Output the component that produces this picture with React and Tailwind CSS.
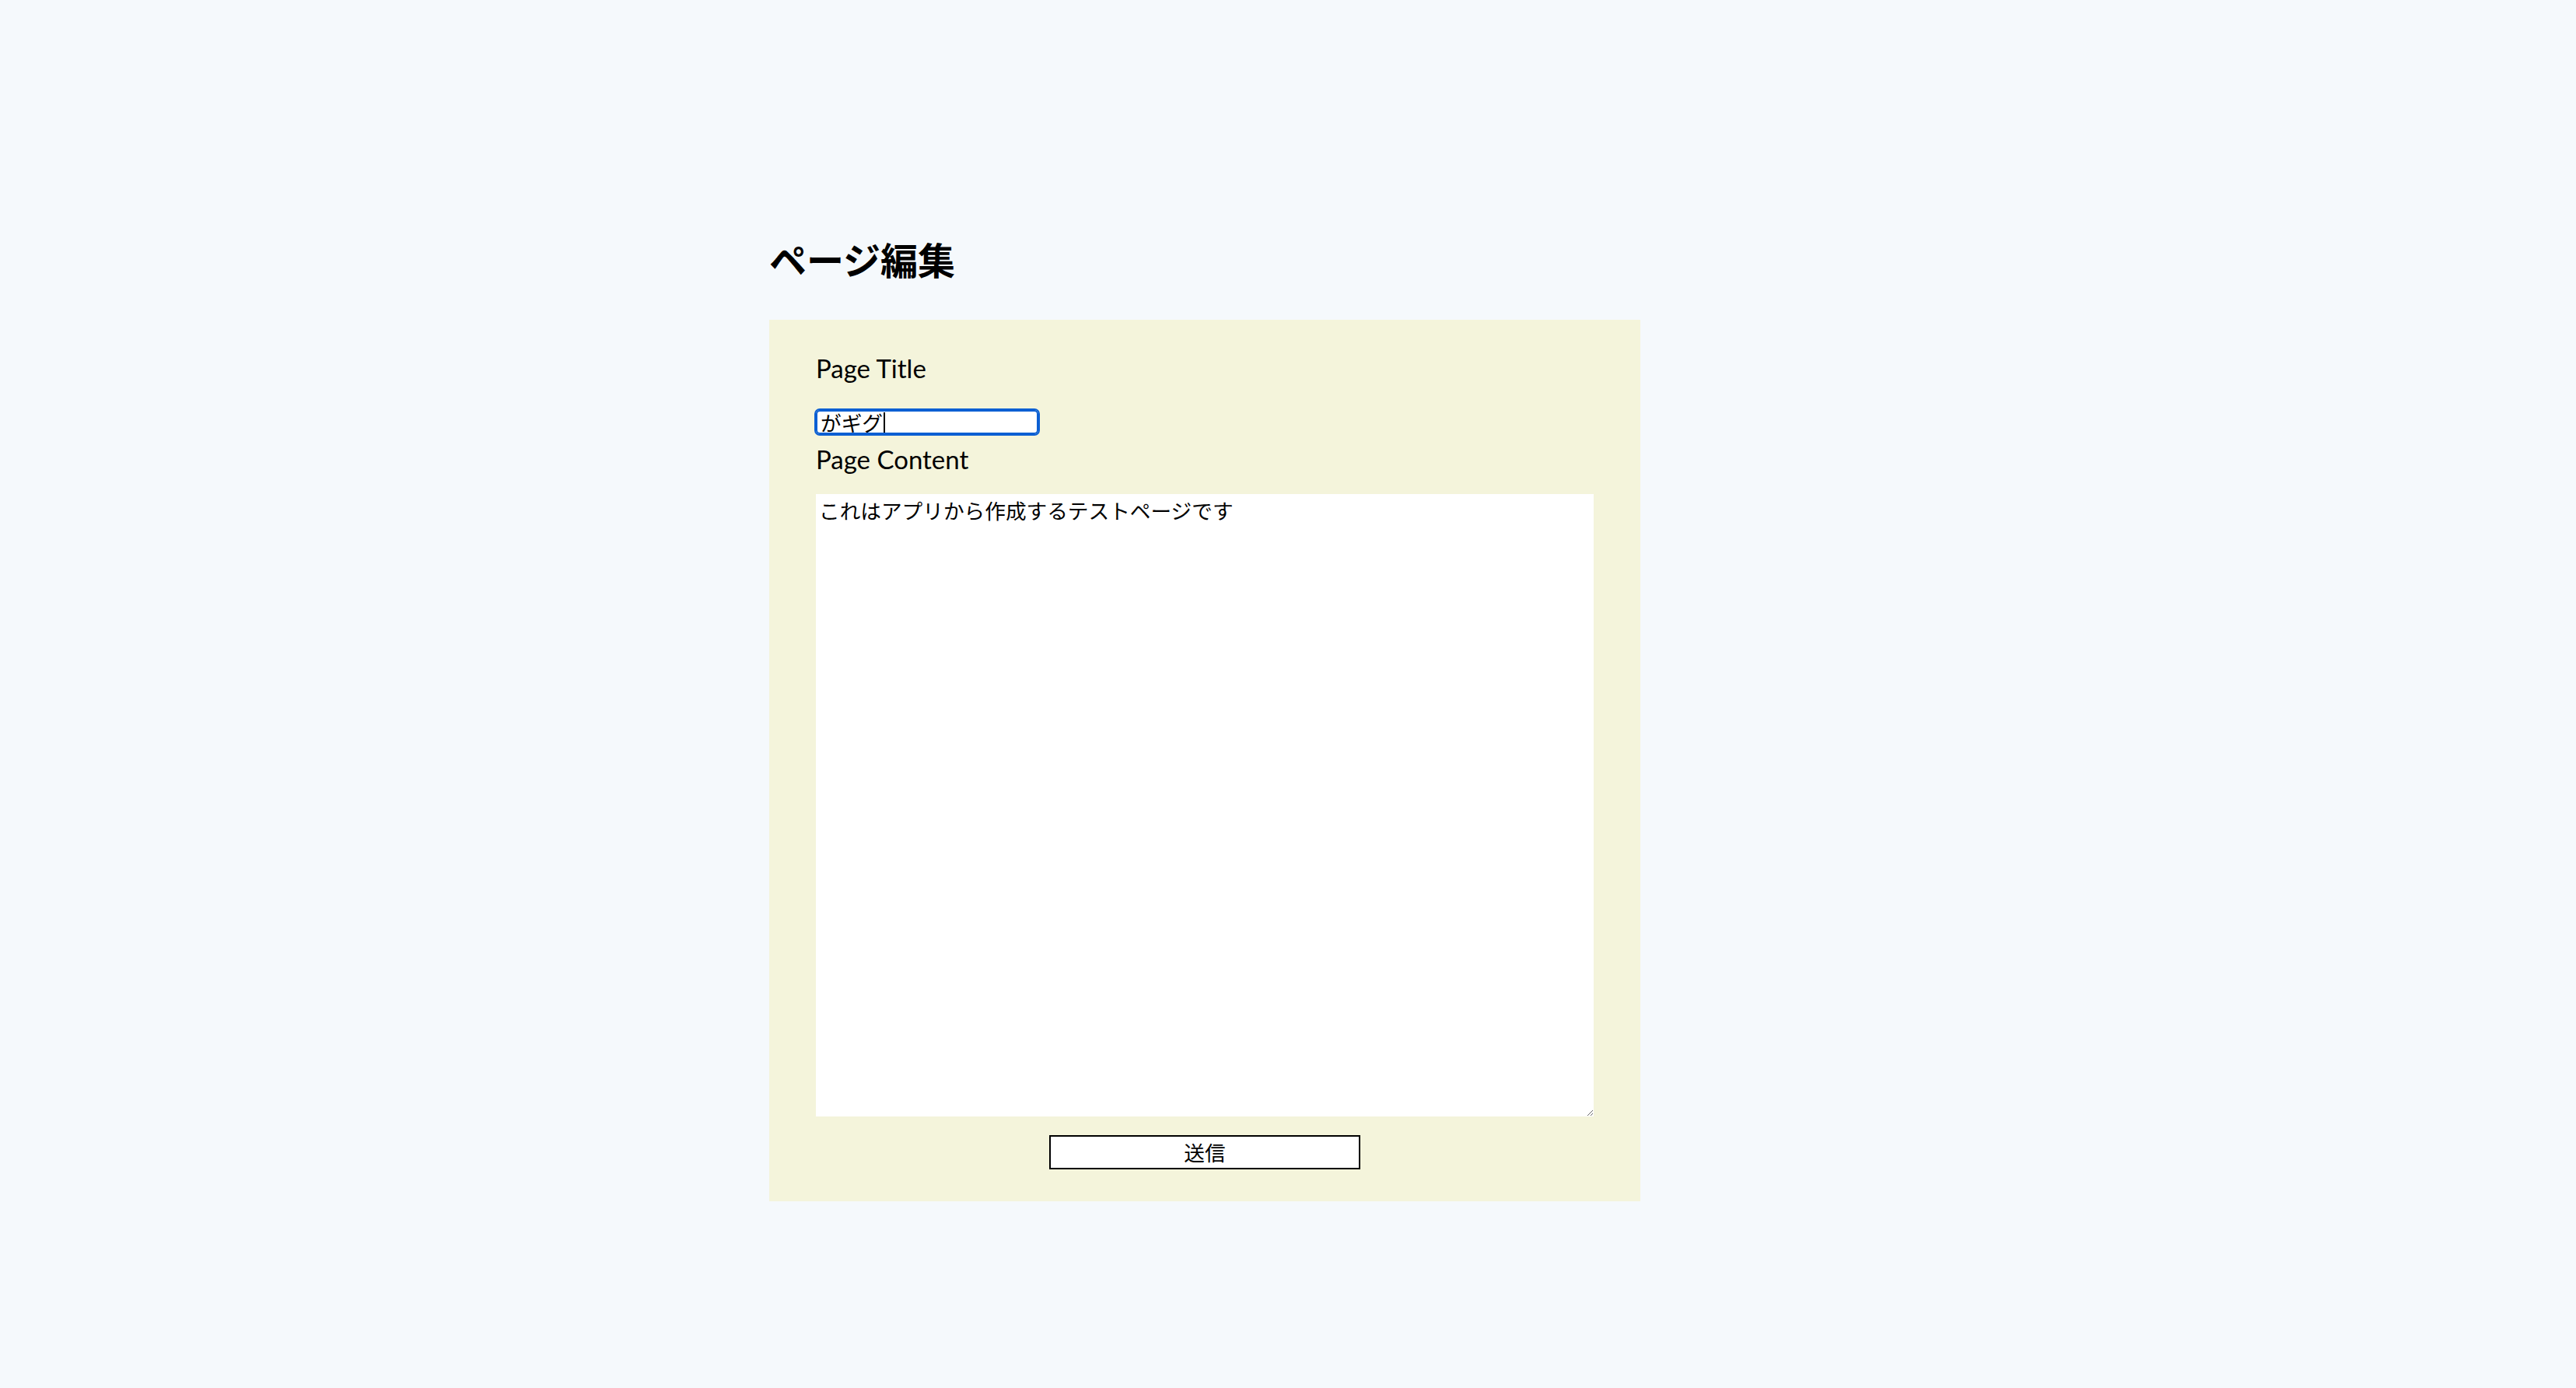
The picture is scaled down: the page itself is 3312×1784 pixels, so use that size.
import React from "react";

export default function App() {
  return (
    <div className="min-h-screen w-full bg-[#f5f9fc] pt-[304px] pl-[989px] text-black font-['Noto_Sans_CJK_JP','Noto_Sans',sans-serif]">
      <h2 className="mb-[51px] text-[48px] font-bold leading-[56px]">ページ編集</h2>

      {/* Form panel */}
      <div className="flex w-[1120px] flex-col bg-[#f4f4db] px-[60px] pt-[40px] pb-[41px]">
        <label className="font-['Lato','Noto_Sans_CJK_JP',sans-serif] text-[33px] leading-[44px]">Page Title</label>
        <div className="mt-[32px] flex h-[31px] w-[286px] items-center rounded-[5px] border-2 border-[#0b5fd3] bg-white pl-[4px] outline-2 outline-[#0b5fd3] text-[26.67px] leading-[28px]">
          <span>がギグ</span>
          <span className="ml-[1px] inline-block h-[26px] w-[2px] bg-black" />
        </div>

        <label className="mt-[10px] font-['Lato','Noto_Sans_CJK_JP',sans-serif] text-[33px] leading-[44px]">Page Content</label>
        <textarea
          readOnly
          defaultValue="これはアプリから作成するテストページです"
          className="mt-[23px] h-[800px] w-[1000px] border-0 bg-white p-[4px] text-[26.67px] leading-[34px] outline-none"
        />

        <div className="mt-[24px] flex justify-center">
          <button className="h-[44px] w-[400px] border-2 border-black bg-white text-[26.67px] leading-[30px]">
            送信
          </button>
        </div>
      </div>
    </div>
  );
}
